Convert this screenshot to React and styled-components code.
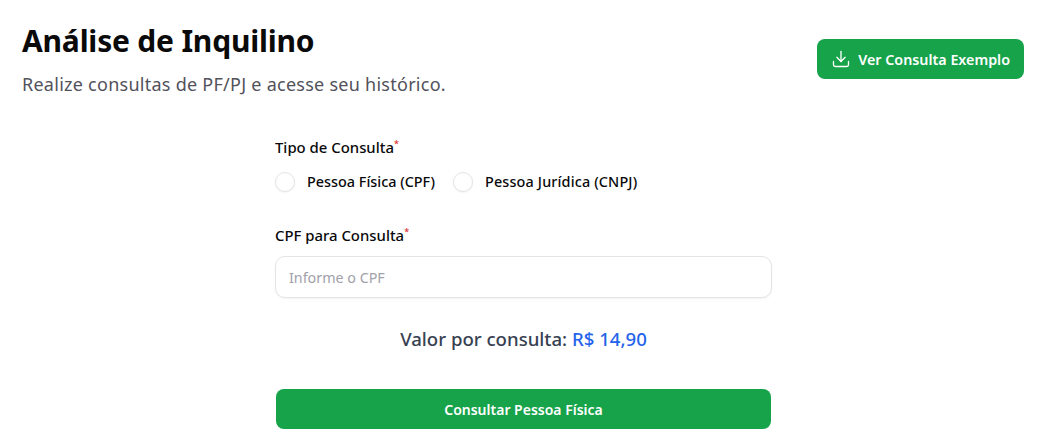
import React from 'react';
import styled, { createGlobalStyle } from 'styled-components';
import { Download } from 'lucide-react';

const GlobalStyle = createGlobalStyle`
  html, body { margin: 0; padding: 0; background: #fff; }
  body { font-family: "Noto Sans", "Open Sans", sans-serif; overflow: hidden; }
  * { box-sizing: border-box; }
`;

const Page = styled.div`
  width: 1045px;
  height: 439px;
  padding: 21px 21px 0 22px;
`;
const Header = styled.header`
  display: flex;
  justify-content: space-between;
  align-items: flex-start;
`;
const Title = styled.h1`
  margin: 0;
  font-size: 30px;
  line-height: 40px;
  font-weight: 700;
  letter-spacing: -0.2px;
  color: #0a0a0a;
`;
const Subtitle = styled.p`
  margin: 9px 0 0;
  font-size: 18px;
  line-height: 28px;
  letter-spacing: 0.26px;
  color: #52525b;
`;
const SampleButton = styled.button`
  display: flex;
  align-items: center;
  gap: 7px;
  height: 40px;
  margin-top: 18px;
  padding: 0 14px;
  border: 0;
  border-radius: 8px;
  background: #16a34a;
  color: #fff;
  font: 600 14.3px "Noto Sans", sans-serif;
`;
const Form = styled.form`
  width: 497px;
  margin: 39px 0 0 253px;
  display: flex;
  flex-direction: column;
`;
const Label = styled.label`
  display: block;
  font-size: 14.9px;
  line-height: 20px;
  font-weight: 500;
  color: #09090b;
`;
const Star = styled.sup`
  color: #dc2626;
  font-size: 9px;
  line-height: 0;
`;
const RadioRow = styled.div`
  display: flex;
  align-items: center;
  margin: 15px 0 33px;
`;
const Radio = styled.span`
  width: 20px;
  height: 20px;
  margin: 0 12px 0 0;
  border: 1px solid #e4e4e7;
  border-radius: 50%;
  background: #fff;
  box-shadow: 0 1px 2px rgba(0, 0, 0, 0.05);
`;
const RadioLabel = styled.span`
  font-size: 14.4px;
  line-height: 20px;
  font-weight: 500;
  letter-spacing: ${(p) => p.$spacing || '0'};
  color: #09090b;
  margin-right: 18px;
`;
const Input = styled.input`
  width: 100%;
  height: 42px;
  margin-top: 11px;
  padding: 0 13px;
  border: 1px solid #e4e4e7;
  border-radius: 10px;
  background: #fff;
  font: 400 14.3px "Noto Sans", sans-serif;
  box-shadow: 0 1px 2px rgba(0, 0, 0, 0.05);
  &::placeholder { color: #a1a1aa; opacity: 1; }
`;
const Price = styled.p`
  margin: 27px 0 0;
  text-align: center;
  font-size: 18.6px;
  line-height: 28px;
  font-weight: 550;
  color: #374151;
`;
const PriceValue = styled.span`
  color: #2563eb;
`;
const SubmitButton = styled.button`
  width: 495px;
  height: 40px;
  margin: 36px 0 0 1px;
  border: 0;
  border-radius: 8px;
  background: #16a34a;
  color: #fff;
  font: 600 14px "Noto Sans", sans-serif;
`;

export default function App() {
  return (
    <Page>
      <GlobalStyle />
      <Header>
        <div>
          <Title>Análise de Inquilino</Title>
          <Subtitle>Realize consultas de PF/PJ e acesse seu histórico.</Subtitle>
        </div>
        <SampleButton type="button">
          <Download size={20} strokeWidth={1.6} />
          Ver Consulta Exemplo
        </SampleButton>
      </Header>
      <Form>
        <Label>
          Tipo de Consulta<Star>*</Star>
        </Label>
        <RadioRow>
          <Radio />
          <RadioLabel>Pessoa Física (CPF)</RadioLabel>
          <Radio />
          <RadioLabel $spacing="0.15px">Pessoa Jurídica (CNPJ)</RadioLabel>
        </RadioRow>
        <Label>
          CPF para Consulta<Star>*</Star>
        </Label>
        <Input placeholder="Informe o CPF" />
        <Price>
          Valor por consulta: <PriceValue>R$ 14,90</PriceValue>
        </Price>
        <SubmitButton type="button">Consultar Pessoa Física</SubmitButton>
      </Form>
    </Page>
  );
}
